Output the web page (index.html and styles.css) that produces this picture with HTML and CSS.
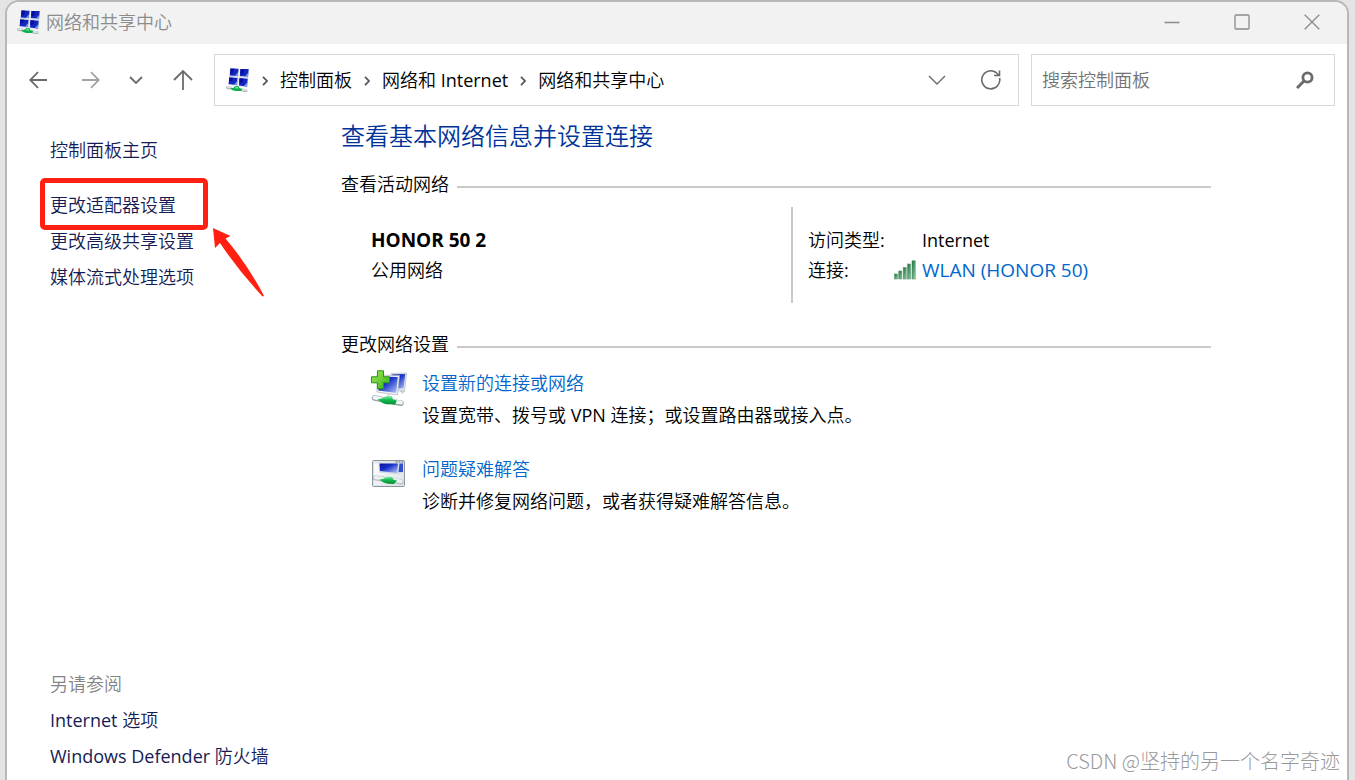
FILE: index.html
```html
<!DOCTYPE html>
<html lang="zh-CN">
<head>
<meta charset="utf-8">
<meta name="viewport" content="width=device-width, initial-scale=1">
<title>网络和共享中心</title>
<link rel="stylesheet" href="styles.css">
</head>
<body>
<svg class="defs" width="0" height="0" aria-hidden="true">
  <defs>
    <linearGradient id="blue" x1="0" y1="0" x2="1" y2="1">
      <stop offset="0" stop-color="#0a12a0"/><stop offset=".4" stop-color="#1630c8"/><stop offset="1" stop-color="#b9cdf8"/>
    </linearGradient>
    <linearGradient id="green" x1="0" y1="0" x2="0" y2="1">
      <stop offset="0" stop-color="#8df0ae"/><stop offset=".45" stop-color="#16bb50"/><stop offset="1" stop-color="#078a38"/>
    </linearGradient>
    <linearGradient id="plus" x1="0" y1="0" x2="1" y2="1">
      <stop offset="0" stop-color="#a5ec5c"/><stop offset="1" stop-color="#2fb012"/>
    </linearGradient>
    <linearGradient id="frame" x1="0" y1="0" x2="1" y2="1">
      <stop offset="0" stop-color="#ffffff"/><stop offset="1" stop-color="#dde3e7"/>
    </linearGradient>
    <linearGradient id="bar" x1="0" y1="0" x2="1" y2="1">
      <stop offset="0" stop-color="#0e6a34"/><stop offset="1" stop-color="#9fd0ae"/>
    </linearGradient>
    <symbol id="network" viewBox="0 0 24 24">
      <g fill="#d5dbe8">
        <path d="M4 .5l9 .5-.5 9L3 9.500zM14 1l9 .1-.7 9-9-.3zM3 9.500l9.500.5-.5 8L2 17zM13 10l9.300.3-.6 9-9.200-1z"/>
      </g>
      <path d="M4.500.5l8 .3-.7 7.200-8-.5z" fill="#1427bd"/><path d="M4.500.5l4 .2L7 5l-2.800 1z" fill="#0610a0"/><path d="M12.200 4l-.4 4-3-.3z" fill="#7898ee"/>
      <path d="M14.500 1l8.200.1-.8 7.500-8-.5z" fill="#1427bd"/><path d="M14.500 1l4 .1-1 4.300-3.300.8z" fill="#0610a0"/><path d="M22.400 4.500l-.5 4.100-3-.2z" fill="#7898ee"/>
      <path d="M3.200 9.400l8.300.5-.6 7-8.200-.9z" fill="#1427bd"/><path d="M3.200 9.400l4.100.3-1.300 3-3 1z" fill="#0610a0"/><path d="M11.200 13l-.3 3.900-3-.3z" fill="#7898ee"/>
      <path d="M13.500 10.200l8.200.5-.8 7.700-7.900-1z" fill="#1427bd"/><path d="M13.500 10.200l4.100.3-1 3.700-3.300.8z" fill="#0610a0"/><path d="M21.400 14l-.5 4.400-3-.4z" fill="#7898ee"/>
      <path d="M1.500 19.500l3 .4M16 22l4 .8" stroke="#aebbbd" stroke-width="3" stroke-linecap="round"/>
      <path d="M1.500 19l3 .4M16 21.500l4 .8" stroke="#e2e8e8" stroke-width="1.500" stroke-linecap="round"/>
      <path d="M4 20.500q4-.3 5.500-2.500h3l.8 2 3 1-1.300 2-5.500 0q-3-.3-5.500-2.500z" fill="#0daf4d"/><path d="M10 18.600l2 .2.5 1.600-4 .2z" fill="#69df91"/>
    </symbol>
    <symbol id="chevron-right" viewBox="0 0 10 10"><path d="M3 .8l4 4.200-4 4.200" fill="none" stroke="currentColor" stroke-width="1.800"/></symbol>
    <symbol id="chevron-down" viewBox="0 0 18 10"><path d="M1 1l8 8 8-8" fill="none" stroke="currentColor" stroke-width="1.400"/></symbol>
  </defs>
</svg>

<div class="window">
  <header class="titlebar">
    <svg class="app-icon"><use href="#network"/></svg>
    <span class="title">网络和共享中心</span>
    <div class="controls">
      <button type="button" aria-label="最小化"><svg width="16" height="16" viewBox="0 0 16 16"><path d="M.5 8.500h15"/></svg></button>
      <button type="button" aria-label="最大化"><svg width="16" height="16" viewBox="0 0 16 16"><rect x="1" y="1" width="14" height="14" rx="1"/></svg></button>
      <button type="button" aria-label="关闭"><svg width="16" height="16" viewBox="0 0 16 16"><path d="M.7.7l14.600 14.600M15.300.7L.7 15.300"/></svg></button>
    </div>
  </header>

  <div class="toolbar">
    <nav class="history" aria-label="导航">
      <button type="button" aria-label="后退"><svg width="18" height="18" viewBox="0 0 18 18"><path d="M18 9H1.500M9 1.200L1.200 9 9 16.800"/></svg></button>
      <button type="button" class="dim" aria-label="前进"><svg width="18" height="18" viewBox="0 0 18 18"><path d="M0 9h16.500M9 1.200L16.800 9 9 16.800"/></svg></button>
      <button type="button" class="recent" aria-label="最近的位置"><svg width="14" height="8" viewBox="0 0 14 8"><path d="M1 1l6 6 6-6"/></svg></button>
      <button type="button" aria-label="上移"><svg width="20" height="20" viewBox="0 0 20 20"><path d="M10 20V1.500M1 10l9-9 9 9"/></svg></button>
    </nav>
    <div class="address">
      <svg class="app-icon"><use href="#network"/></svg>
      <svg class="sep"><use href="#chevron-right"/></svg>
      <a href="#">控制面板</a>
      <svg class="sep"><use href="#chevron-right"/></svg>
      <a href="#">网络和 Internet</a>
      <svg class="sep"><use href="#chevron-right"/></svg>
      <a href="#">网络和共享中心</a>
      <button type="button" class="drop" aria-label="以前的位置"><svg width="18" height="10"><use href="#chevron-down"/></svg></button>
      <button type="button" aria-label="刷新"><svg width="20" height="20" viewBox="0 0 20 20"><path d="M18.600 8A9 9 0 1 1 15 2.500L17.500 5M18.500 .5V5.500h-5.500" stroke-width="1.600"/></svg></button>
    </div>
    <form class="search">
      <input type="search" aria-label="搜索控制面板" placeholder="搜索控制面板">
      <button type="button" aria-label="搜索"><svg width="18" height="18" viewBox="0 0 18 18"><circle cx="11.500" cy="6.500" r="4.600" stroke-width="2.800"/><path d="M8 10l-7 7" stroke-width="3"/></svg></button>
    </form>
  </div>

  <div class="content">
    <aside class="sidebar">
      <a class="home" href="#">控制面板主页</a>
      <ul>
        <li class="marked">
          <a href="#">更改适配器设置</a>
          <svg class="arrow" width="54" height="70" viewBox="0 0 54 70" aria-hidden="true"><path d="M0 0L17.500 8 12.500 10.500Q35 37 51 68L49.500 68.500Q25 42 7 15L2 20Z" fill="#ff2012"/></svg>
        </li>
        <li><a href="#">更改高级共享设置</a></li>
        <li><a href="#">媒体流式处理选项</a></li>
      </ul>
      <div class="see-also">
        <h2>另请参阅</h2>
        <ul>
          <li><a href="#">Internet 选项</a></li>
          <li><a href="#">Windows Defender 防火墙</a></li>
        </ul>
      </div>
    </aside>

    <main>
      <h1>查看基本网络信息并设置连接</h1>
      <section>
        <h2 class="rule">查看活动网络</h2>
        <div class="active">
          <div class="name">
            <strong>HONOR 50 2</strong>
            <span>公用网络</span>
          </div>
          <dl>
            <dt>访问类型:</dt>
            <dd>Internet</dd>
            <dt>连接:</dt>
            <dd>
              <svg class="signal" width="22" height="20" viewBox="0 0 22 20" aria-hidden="true"><g fill="url(#bar)" stroke="#55966b" stroke-width=".6"><rect x=".5" y="14" width="3" height="5"/><rect x="4.800" y="11" width="3" height="8"/><rect x="9.200" y="7.500" width="3" height="11.500"/><rect x="13.600" y="4" width="3" height="15"/><rect x="18" y=".8" width="3.200" height="18.200"/></g></svg>
              <a href="#">WLAN (HONOR 50)</a>
            </dd>
          </dl>
        </div>
      </section>
      <section>
        <h2 class="rule">更改网络设置</h2>
        <div class="tasks">
          <article>
            <svg width="36" height="36" viewBox="0 0 36 36" aria-hidden="true">
              <path d="M20 3.500l15.700-.5-2 17-8 1z" fill="#e6eaf0" stroke="#a9b0bd" stroke-width=".6"/>
              <path d="M21 4.500l13.300-.4-1.700 14.100-6.600.6z" fill="url(#blue)"/>
              <path d="M6 5l22.500.5L26.500 25 6 22z" fill="#f2f4f8" stroke="#a5adbb" stroke-width=".7"/>
              <path d="M7.500 6.400l19.300.5-1.600 16-17.700-2.500z" fill="url(#blue)"/>
              <path d="M18 24l-1 2M29 21l4 .5-3 2" stroke="#c4ccd2" stroke-width="1.500" fill="none"/>
              <path d="M3.500 28l7 1.300M23 32l7 1.200" stroke="#98a3a6" stroke-width="5.500" stroke-linecap="round"/>
              <path d="M3.500 27.600l7 1.200M23 31.400l7 1.300" stroke="#f1f4f4" stroke-width="3.800" stroke-linecap="round"/>
              <path d="M6.500 29.500q5-.3 8.500-3.500h6l1 3.500 4 1-2 4-8-.3q-5-.5-9.500-4.700z" fill="url(#green)"/>
              <path d="M6.500.8h6v6h6v6h-6v6h-6v-6h-6v-6h6z" fill="url(#plus)" stroke="#279811" stroke-width="1"/>
            </svg>
            <div>
              <h3><a href="#">设置新的连接或网络</a></h3>
              <p>设置宽带、拨号或 VPN 连接；或设置路由器或接入点。</p>
            </div>
          </article>
          <article>
            <svg width="36" height="36" viewBox="0 0 36 36" aria-hidden="true">
              <rect x="1.500" y="4.500" width="32" height="26" rx="1" fill="#dfe4e8" stroke="#8e969d"/>
              <path d="M24.500 6h2M27.500 6h2M30.500 6h2" stroke="#5a6672" stroke-width="1"/>
              <rect x="3" y="7.500" width="29" height="21.500" fill="url(#frame)"/>
              <path d="M7.500 7.500H32v9l-4 2-20-2z" fill="#d5dbe6"/><path d="M8.500 7.500H27l-1 9.500-17-2z" fill="url(#blue)"/><path d="M28.500 7.500H32v8.500h-4.500z" fill="#3150cf"/>
              <path d="M4.500 22l8 1M23 24.500l7 1.500" stroke="#b3bec1" stroke-width="5" stroke-linecap="round"/>
              <path d="M4.500 21.600l8 1M23 24l7 1.500" stroke="#edf1f1" stroke-width="3.400" stroke-linecap="round"/>
              <path d="M8.500 23.500q4-.3 8-3l5 .5.500 2.500 4 1-3 3.500-6-.3q-4.500-.2-8.500-4.200z" fill="url(#green)"/>
            </svg>
            <div>
              <h3><a href="#">问题疑难解答</a></h3>
              <p>诊断并修复网络问题，或者获得疑难解答信息。</p>
            </div>
          </article>
        </div>
      </section>
    </main>
  </div>
  <div class="watermark">CSDN @坚持的另一个名字奇迹</div>
</div>
</body>
</html>
```

FILE: styles.css
```css
*,
*::before,
*::after {
  box-sizing: border-box;
}

body {
  margin: 0;
  background: #e4e4e4;
  color: #000;
  font: 18px/24px "Open Sans", "Noto Sans CJK SC DemiLight", "Noto Sans CJK SC", sans-serif;
}

h1, h2, h3, p, ul, dl, dd {
  margin: 0;
  padding: 0;
  font-size: 18px;
  font-weight: 400;
}

ul {
  list-style: none;
}

a {
  color: inherit;
  text-decoration: none;
}

button {
  display: grid;
  place-items: center;
  padding: 0;
  border: 0;
  background: none;
  color: #6b6b6b;
}

button svg {
  fill: none;
  stroke: currentColor;
  stroke-width: 1.8;
}

.defs {
  position: absolute;
}

.window {
  position: relative;
  display: flex;
  flex-direction: column;
  min-height: 100vh;
  margin: 0 6px 0 5px;
  border: 2px solid #b8b8b8;
  border-bottom: 0;
  border-radius: 14px 14px 0 0;
  background: #fff;
  overflow: hidden;
}

.titlebar {
  display: flex;
  align-items: center;
  height: 42px;
  padding: 0 0 3px 10px;
  background: #f2f2f2;
}

.app-icon {
  flex: none;
  width: 24px;
  height: 24px;
}

.title {
  margin-left: 5px;
  color: #8c8c8c;
}

.controls {
  display: flex;
  margin-left: auto;
}

.controls button {
  width: 70px;
  height: 38px;
  color: #8a8a8a;
}

.controls svg {
  stroke-width: 1.3;
}

.toolbar {
  display: flex;
  padding: 10px 12px 0 8px;
}

.history {
  display: flex;
  width: 199px;
}

.history button {
  width: 46px;
  height: 52px;
}

.history .dim {
  width: 60px;
  color: #a3a3a3;
}

.history .recent {
  width: 32px;
}

.history button:last-child {
  width: 62px;
}

.address {
  display: flex;
  flex: 1;
  align-items: center;
  height: 52px;
  padding: 0 5px 0 11px;
  border: 1px solid #d9d9d9;
}

.sep {
  flex: none;
  width: 10px;
  height: 10px;
  margin: 2px 10px 0;
  color: #555;
}

.address button {
  width: 44px;
  height: 44px;
}

.address .drop {
  width: 64px;
  margin-left: auto;
}

.search {
  display: flex;
  width: 304px;
  height: 52px;
  margin-left: 12px;
  border: 1px solid #d9d9d9;
}

.search input {
  flex: 1;
  min-width: 0;
  padding: 0 0 0 10px;
  border: 0;
  outline: 0;
  background: none;
  font: inherit;
}

.search input::placeholder {
  color: #737373;
  opacity: 1;
}

.search button {
  width: 58px;
}

.content {
  display: flex;
  flex: 1;
}

.sidebar {
  display: flex;
  flex: none;
  flex-direction: column;
  width: 334px;
  padding: 26px 0 6px 43px;
  color: #151c55;
  line-height: 36px;
}

.home {
  margin-bottom: 19px;
}

.marked {
  position: relative;
}

.marked::before {
  content: "";
  position: absolute;
  top: -9px;
  left: -10px;
  width: 168px;
  height: 52px;
  border: 5px solid #ff2012;
  border-radius: 5px;
}

.arrow {
  position: absolute;
  top: 41px;
  left: 163px;
}

.see-also {
  margin-top: auto;
}

.see-also h2 {
  color: #848484;
}

main {
  flex: 1;
  max-width: 870px;
  padding-top: 14px;
}

h1 {
  color: #003399;
  font-size: 24px;
  line-height: 32px;
}

.rule {
  display: flex;
  align-items: center;
  gap: 8px;
  margin-top: 20px;
}

.rule::after {
  content: "";
  flex: 1;
  height: 2px;
  margin-top: 5px;
  background: #c9c9c9;
}

.active {
  display: flex;
  height: 96px;
  margin: 11px 0 29px;
  line-height: 30px;
}

.name {
  display: flex;
  flex-direction: column;
  width: 450px;
  padding: 18px 0 0 30px;
}

.name strong,
.active a {
  font-size: 19px;
}

.active dl {
  display: grid;
  grid-template-columns: 86px auto;
  align-content: start;
  padding: 18px 0 0 15px;
  border-left: 2px solid #c9c9c9;
}

.active dd {
  display: flex;
  align-items: center;
  gap: 6px;
}

.active dd:first-of-type {
  padding-left: 28px;
}

dd a, h3 a {
  color: #0066cc;
}

.tasks {
  display: grid;
  gap: 22px;
  margin: 11px 0 0 30px;
}

.tasks article {
  display: flex;
  gap: 15px;
  line-height: 32px;
}

.tasks svg {
  flex: none;
  margin-top: 3px;
}

.watermark {
  position: absolute;
  right: 7px;
  bottom: 6px;
  color: #999;
  font: 20px/26px "Noto Sans CJK SC Light", "Noto Sans CJK SC", sans-serif;
}
```
